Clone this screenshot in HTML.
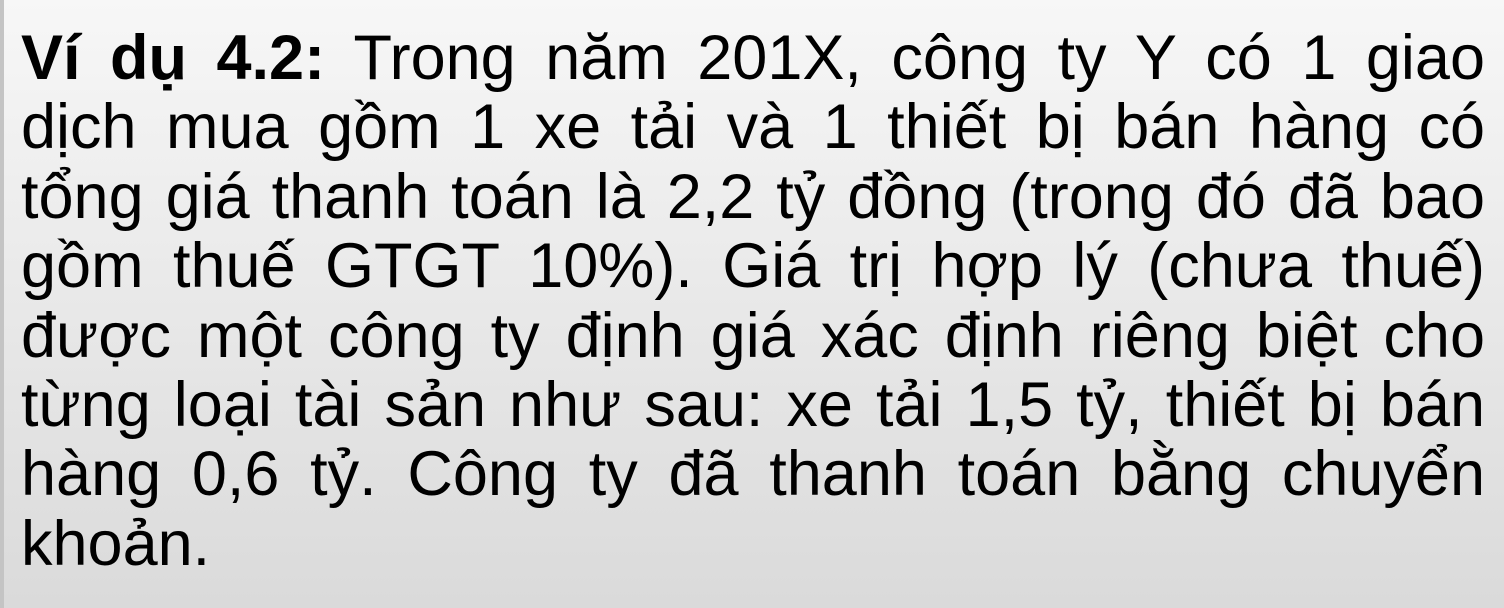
<!DOCTYPE html>
<html><head><meta charset="utf-8"><style>
html,body{margin:0;padding:0}
body{width:1504px;height:608px;overflow:hidden;background:linear-gradient(#f7f7f7,#dadada);position:relative;font-family:"Liberation Sans",Arial,sans-serif;}
.bar{position:absolute;left:0;top:0;width:4px;height:608px;background:#c4c4c4}
.t{position:absolute;left:21px;top:24px;width:1464px;font-size:63px;line-height:69.4px;color:#000}
.t div{text-align:justify;text-align-last:justify;white-space:nowrap;height:69.4px}
.t div.l{text-align-last:left}
</style></head><body><div class="bar"></div>
<div class="t">
<div><b>Ví dụ 4.2:</b> Trong năm 201X, công ty Y có 1 giao</div>
<div>dịch mua gồm 1 xe tải và 1 thiết bị bán hàng có</div>
<div>tổng giá thanh toán là 2,2 tỷ đồng (trong đó đã bao</div>
<div>gồm thuế GTGT 10%). Giá trị hợp lý (chưa thuế)</div>
<div>được một công ty định giá xác định riêng biệt cho</div>
<div>từng loại tài sản như sau: xe tải 1,5 tỷ, thiết bị bán</div>
<div>hàng 0,6 tỷ. Công ty đã thanh toán bằng chuyển</div>
<div class="l">khoản.</div>
</div>
</body></html>
